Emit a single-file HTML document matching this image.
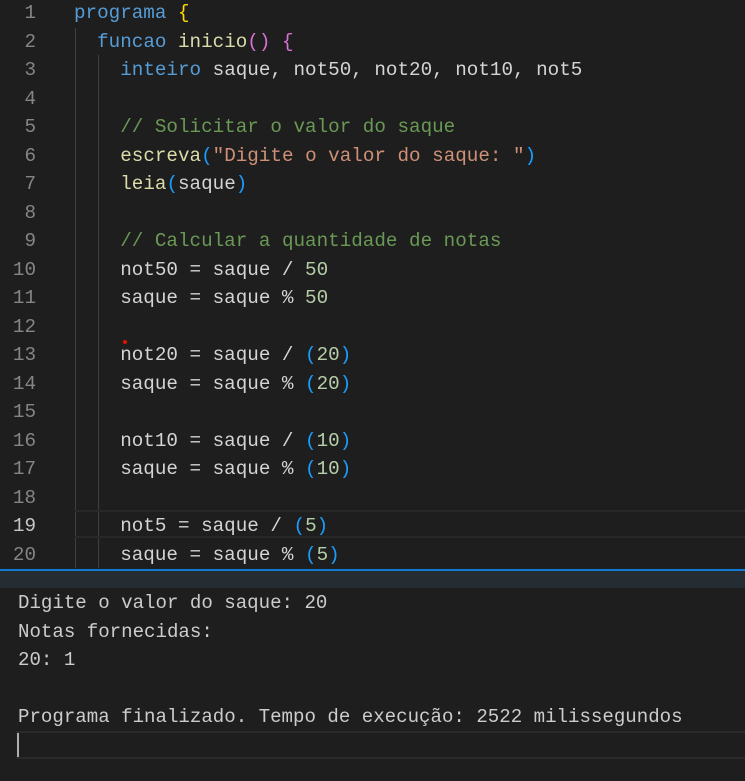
<!DOCTYPE html><html><head><style>
body{margin:0;width:745px;height:781px;background:#1e1e1e;overflow:hidden;position:relative;font-family:"Liberation Mono",monospace;}
.ed{position:absolute;left:0;top:-1px;width:745px;}
.l{height:28.5px;line-height:28.5px;font-size:19.25px;white-space:pre;color:#d4d4d4;position:relative}
.n{position:absolute;left:0;width:36px;text-align:right;color:#858585}
.c{position:absolute;left:74px}
.k{color:#569cd6}.f{color:#dcdcaa}.s{color:#ce9178}.m{color:#6a9955}.d{color:#b5cea8}.y{color:#ffd700}.p{color:#da70d6}.b{color:#179fff}
.g{position:absolute;top:28px;width:1px;background:#404040}
.term{position:absolute;left:18px;top:589px;font-size:19.1px;line-height:28.5px;color:#cccccc;white-space:pre}
</style></head><body>
<div class="g" style="left:75px;height:540px"></div>
<div class="g" style="left:98px;top:55px;height:513px"></div>
<div style="position:absolute;left:75px;top:510px;width:670px;height:28px;border-top:2px solid #282828;border-bottom:2px solid #282828;box-sizing:border-box"></div>
<div class="ed">
<div class="l"><span class="n">1</span><span class="c"><span class="k">programa</span> <span class="y">{</span></span></div>
<div class="l"><span class="n">2</span><span class="c">  <span class="k">funcao</span> <span class="f">inicio</span><span class="p">()</span> <span class="p">{</span></span></div>
<div class="l"><span class="n">3</span><span class="c">    <span class="k">inteiro</span> saque, not50, not20, not10, not5</span></div>
<div class="l"><span class="n">4</span></div>
<div class="l"><span class="n">5</span><span class="c">    <span class="m">// Solicitar o valor do saque</span></span></div>
<div class="l"><span class="n">6</span><span class="c">    <span class="f">escreva</span><span class="b">(</span><span class="s">"Digite o valor do saque: "</span><span class="b">)</span></span></div>
<div class="l"><span class="n">7</span><span class="c">    <span class="f">leia</span><span class="b">(</span>saque<span class="b">)</span></span></div>
<div class="l"><span class="n">8</span></div>
<div class="l"><span class="n">9</span><span class="c">    <span class="m">// Calcular a quantidade de notas</span></span></div>
<div class="l"><span class="n">10</span><span class="c">    not50 = saque / <span class="d">50</span></span></div>
<div class="l"><span class="n">11</span><span class="c">    saque = saque % <span class="d">50</span></span></div>
<div class="l"><span class="n">12</span></div>
<div class="l"><span class="n">13</span><span class="c">    not20 = saque / <span class="b">(</span><span class="d">20</span><span class="b">)</span></span></div>
<div class="l"><span class="n">14</span><span class="c">    saque = saque % <span class="b">(</span><span class="d">20</span><span class="b">)</span></span></div>
<div class="l"><span class="n">15</span></div>
<div class="l"><span class="n">16</span><span class="c">    not10 = saque / <span class="b">(</span><span class="d">10</span><span class="b">)</span></span></div>
<div class="l"><span class="n">17</span><span class="c">    saque = saque % <span class="b">(</span><span class="d">10</span><span class="b">)</span></span></div>
<div class="l"><span class="n">18</span></div>
<div class="l"><span class="n" style="color:#c6c6c6">19</span><span class="c">    not5 = saque / <span class="b">(</span><span class="d">5</span><span class="b">)</span></span></div>
<div class="l"><span class="n">20</span><span class="c">    saque = saque % <span class="b">(</span><span class="d">5</span><span class="b">)</span></span></div>
</div>
<div style="position:absolute;left:123px;top:340px;width:4px;height:4px;border-radius:50%;background:#e51400"></div>
<div style="position:absolute;left:0;top:569px;width:745px;height:2px;background:#0e7ad3"></div>
<div style="position:absolute;left:0;top:571px;width:745px;height:17px;background:#252d33"></div>
<div class="term">Digite o valor do saque: 20
Notas fornecidas:
20: 1

Programa finalizado. Tempo de execução: 2522 milissegundos</div>
<div style="position:absolute;left:16px;top:731px;width:729px;height:28px;border-top:2px solid #2a2a2a;border-bottom:2px solid #2a2a2a;box-sizing:border-box"></div>
<div style="position:absolute;left:17px;top:733px;width:2px;height:24px;background:#aeafad"></div>
</body></html>
